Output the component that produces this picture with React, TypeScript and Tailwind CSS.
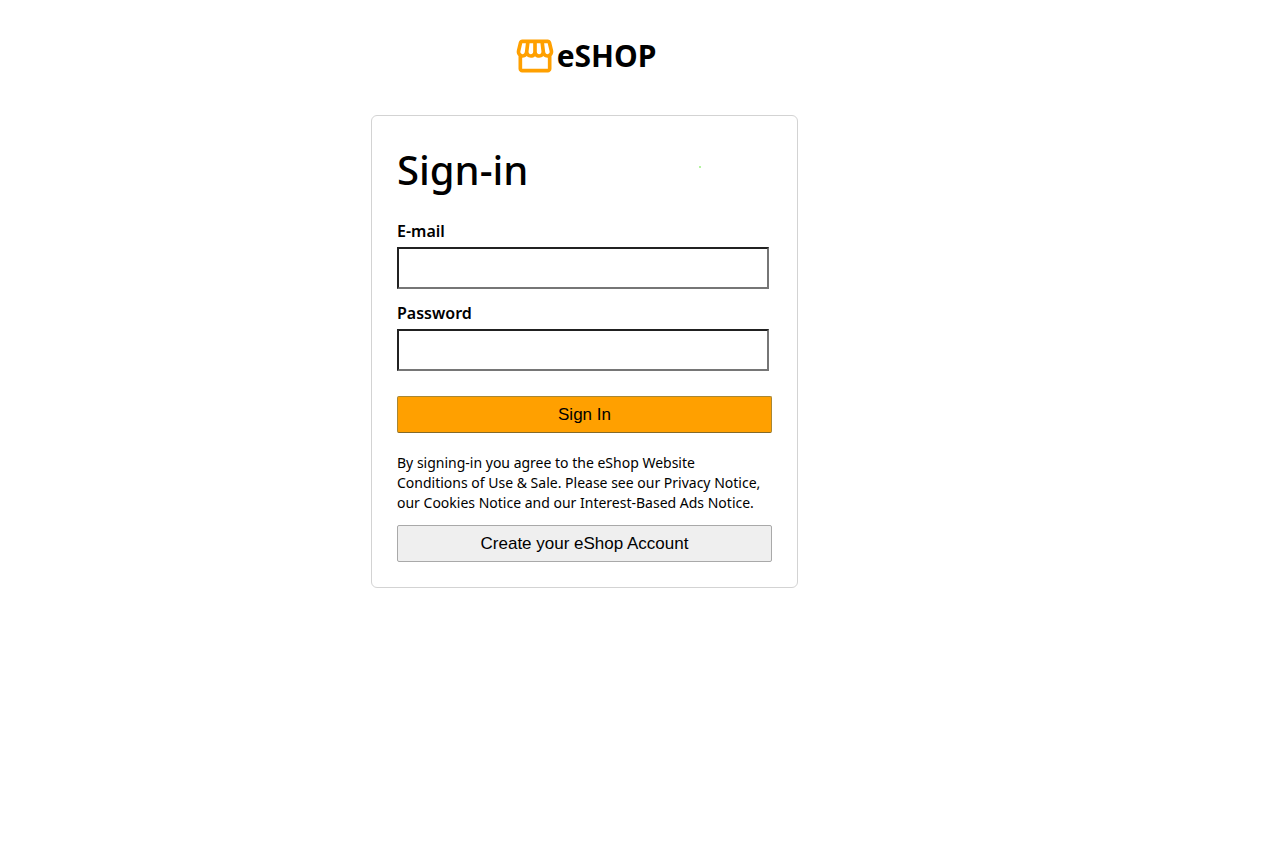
import { useState } from 'react';
import { MdOutlineStorefront } from 'react-icons/md';

type FieldProps = {
  id: string;
  label: string;
  type: string;
  value: string;
  onChange: (value: string) => void;
};

function Field({ id, label, type, value, onChange }: FieldProps) {
  return (
    <div className="flex flex-col gap-1">
      <label htmlFor={id} className="text-base leading-6 font-semibold">
        {label}
      </label>
      <input
        id={id}
        type={type}
        value={value}
        onChange={(e) => onChange(e.target.value)}
        className="mr-[3px] h-[42px] border-2 border-t-[#212121] border-r-[#767676] border-b-[#767676] border-l-[#212121] bg-white px-2 text-base outline-none"
      />
    </div>
  );
}

export default function App() {
  const [email, setEmail] = useState('');
  const [password, setPassword] = useState('');

  return (
    <main className="flex min-h-screen flex-col items-center bg-white pt-[34px] pr-[94px] font-['Noto_Sans',sans-serif] text-black">
      <a href="#" className="flex items-center">
        <MdOutlineStorefront className="size-11 text-[#ffa000]" aria-hidden="true" />
        <span className="text-3xl leading-11 font-bold">eSHOP</span>
      </a>

      <section className="mt-[37px] w-full max-w-[427px] rounded-md border border-[#d3d3d3] p-[25px]">
        <div className="flex items-center justify-between pr-[71px]">
          <h1 className="text-[40px] leading-[58px] font-medium">Sign-in</h1>
          <span className="mb-1.5 size-0.5 bg-[#b4f5a0]" aria-hidden="true" />
        </div>

        <form className="mt-5 flex flex-col" onSubmit={(e) => e.preventDefault()}>
          <div className="flex flex-col gap-3">
            <Field id="email" label="E-mail" type="email" value={email} onChange={setEmail} />
            <Field
              id="password"
              label="Password"
              type="password"
              value={password}
              onChange={setPassword}
            />
          </div>
          <button
            type="submit"
            className="mt-[25px] h-[37px] rounded-xs border border-[#a88734] border-b-[#846a29] bg-[#ffa000] font-['Liberation_Sans',sans-serif] text-[17px] leading-6"
          >
            Sign In
          </button>
        </form>

        <p className="mt-5 pr-2 text-sm leading-5 font-normal">
          By signing-in you agree to the eShop Website Conditions of Use &amp; Sale. Please see our
          Privacy Notice, our Cookies Notice and our Interest-Based Ads Notice.
        </p>

        <button
          type="button"
          className="mt-3 h-[37px] w-full rounded-xs border border-[#a9a9a9] bg-[#efefef] font-['Liberation_Sans',sans-serif] text-[17px] leading-6"
        >
          Create your eShop Account
        </button>
      </section>
    </main>
  );
}
